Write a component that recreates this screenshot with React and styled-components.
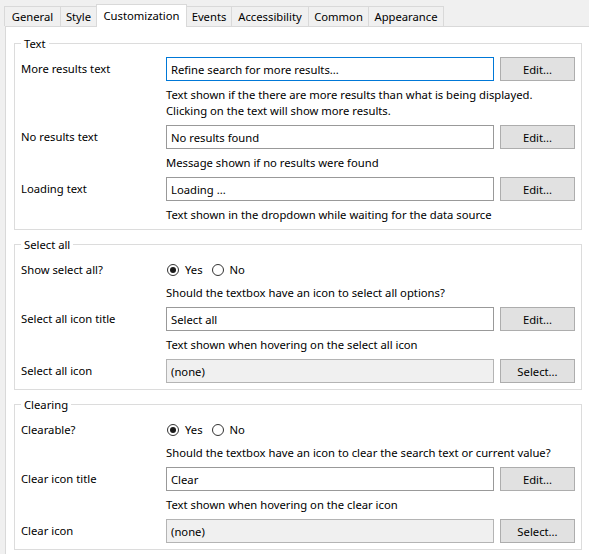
import React from 'react';
import styled, { createGlobalStyle } from 'styled-components';

const GlobalStyle = createGlobalStyle`
  html, body { margin: 0; padding: 0; background: #f0f0f0; overflow: hidden; }
  body {
    font-family: "Noto Sans", "Open Sans", sans-serif;
    font-size: 11.25px;
    color: #000;
  }
  #root { width: 589px; height: 554px; overflow: hidden; }
`;

const Window = styled.div`
  width: 589px;
  height: 554px;
  overflow: hidden;
  background: #f0f0f0;
`;

const TabBar = styled.div`
  display: flex;
  align-items: flex-end;
  height: 27px;
  padding-left: 5px;
  margin-bottom: -1px;
  position: relative;
  z-index: 1;
`;

const Tab = styled.div`
  box-sizing: border-box;
  width: ${(p) => p.$w}px;
  height: ${(p) => (p.$active ? 23 : 20)}px;
  margin-left: -1px;
  margin-bottom: ${(p) => (p.$active ? 0 : 1)}px;
  border: 1px solid #d9d9d9;
  border-bottom: none;
  background: ${(p) => (p.$active ? '#ffffff' : '#f0f0f0')};
  position: relative;
  z-index: ${(p) => (p.$active ? 2 : 1)};
  display: flex;
  align-items: center;
  justify-content: center;
  line-height: 16px;
  white-space: nowrap;
  padding-bottom: ${(p) => (p.$active ? 1 : 0)}px;
`;

const Panel = styled.div`
  box-sizing: border-box;
  width: 592px;
  margin-left: 5px;
  border: 1px solid #d9d9d9;
  background: #ffffff;
  padding: 16px 8px;
  display: flex;
  flex-direction: column;
  gap: 14px;
  height: 560px;
`;

const Group = styled.div`
  box-sizing: border-box;
  width: 568px;
  border: 1px solid #dcdcdc;
  padding: 13px 6px 6px;
  position: relative;
  display: flex;
  flex-direction: column;
  gap: 6px;
`;

const Legend = styled.div`
  position: absolute;
  top: -8px;
  left: 6px;
  padding: 0 3px;
  background: #ffffff;
  line-height: 16px;
`;

const FieldRow = styled.div`
  display: flex;
  align-items: center;
  height: 24px;
`;

const RadioRow = styled.div`
  box-sizing: border-box;
  display: flex;
  align-items: center;
  height: 21px;
  padding-top: 2px;
`;

const Label = styled.div`
  width: 145px;
  flex: none;
  line-height: 16px;
  white-space: nowrap;
`;

const TextBox = styled.input`
  box-sizing: border-box;
  width: 328px;
  height: 24px;
  margin: 0;
  padding: 0 4px;
  border: 1px solid ${(p) => (p.$focused ? '#0078d7' : p.disabled ? '#b4b4b4' : '#999999')};
  background: ${(p) => (p.disabled ? '#f0f0f0' : '#ffffff')};
  font: inherit;
  color: #000;
  outline: none;
  border-radius: 0;
  &:disabled { color: #000; -webkit-text-fill-color: #000; opacity: 1; }
`;

const Button = styled.button`
  box-sizing: border-box;
  width: 75px;
  height: 24px;
  margin: 0 0 0 6px;
  padding: 0;
  border: 1px solid #adadad;
  background: #e1e1e1;
  font: inherit;
  color: #000;
  border-radius: 0;
`;

const Help = styled.div`
  padding-left: 145px;
  line-height: 16px;
  white-space: nowrap;
`;

const RadioGroup = styled.div`
  display: flex;
  align-items: center;
  gap: 9px;
  margin-left: 1px;
`;

const RadioOption = styled.label`
  display: flex;
  align-items: center;
  gap: 6px;
  line-height: 16px;
`;

const RadioCircle = styled.span`
  box-sizing: border-box;
  width: 12px;
  height: 12px;
  border: 1px solid #333333;
  border-radius: 50%;
  display: flex;
  align-items: center;
  justify-content: center;
  background: #ffffff;
  &::after {
    content: '';
    display: ${(p) => (p.$checked ? 'block' : 'none')};
    width: 6px;
    height: 6px;
    border-radius: 50%;
    background: #1a1a1a;
  }
`;

const tabs = [
  { name: 'General', w: 57 },
  { name: 'Style', w: 37 },
  { name: 'Customization', w: 91, active: true },
  { name: 'Events', w: 46 },
  { name: 'Accessibility', w: 78 },
  { name: 'Common', w: 61 },
  { name: 'Appearance', w: 76 },
];

function Field({ label, value, button, disabled, focused }) {
  return (
    <FieldRow>
      <Label>{label}</Label>
      <TextBox readOnly value={value} disabled={disabled} $focused={focused} />
      <Button type="button">{button}</Button>
    </FieldRow>
  );
}

function YesNo({ label }) {
  return (
    <RadioRow>
      <Label>{label}</Label>
      <RadioGroup>
        <RadioOption>
          <RadioCircle $checked />
          Yes
        </RadioOption>
        <RadioOption>
          <RadioCircle />
          No
        </RadioOption>
      </RadioGroup>
    </RadioRow>
  );
}

export default function App() {
  return (
    <Window>
      <GlobalStyle />
      <TabBar>
        {tabs.map((t) => (
          <Tab key={t.name} $w={t.w} $active={t.active}>
            {t.name}
          </Tab>
        ))}
      </TabBar>
      <Panel>
        <Group>
          <Legend>Text</Legend>
          <Field label="More results text" value="Refine search for more results..." button="Edit..." focused />
          <Help>
            Text shown if the there are more results than what is being displayed.
            <br />
            Clicking on the text will show more results.
          </Help>
          <Field label="No results text" value="No results found" button="Edit..." />
          <Help>Message shown if no results were found</Help>
          <Field label="Loading text" value="Loading ..." button="Edit..." />
          <Help>Text shown in the dropdown while waiting for the data source</Help>
        </Group>
        <Group>
          <Legend>Select all</Legend>
          <YesNo label="Show select all?" />
          <Help>Should the textbox have an icon to select all options?</Help>
          <Field label="Select all icon title" value="Select all" button="Edit..." />
          <Help>Text shown when hovering on the select all icon</Help>
          <Field label="Select all icon" value="(none)" button="Select..." disabled />
        </Group>
        <Group>
          <Legend>Clearing</Legend>
          <YesNo label="Clearable?" />
          <Help>Should the textbox have an icon to clear the search text or current value?</Help>
          <Field label="Clear icon title" value="Clear" button="Edit..." />
          <Help>Text shown when hovering on the clear icon</Help>
          <Field label="Clear icon" value="(none)" button="Select..." disabled />
        </Group>
      </Panel>
    </Window>
  );
}
